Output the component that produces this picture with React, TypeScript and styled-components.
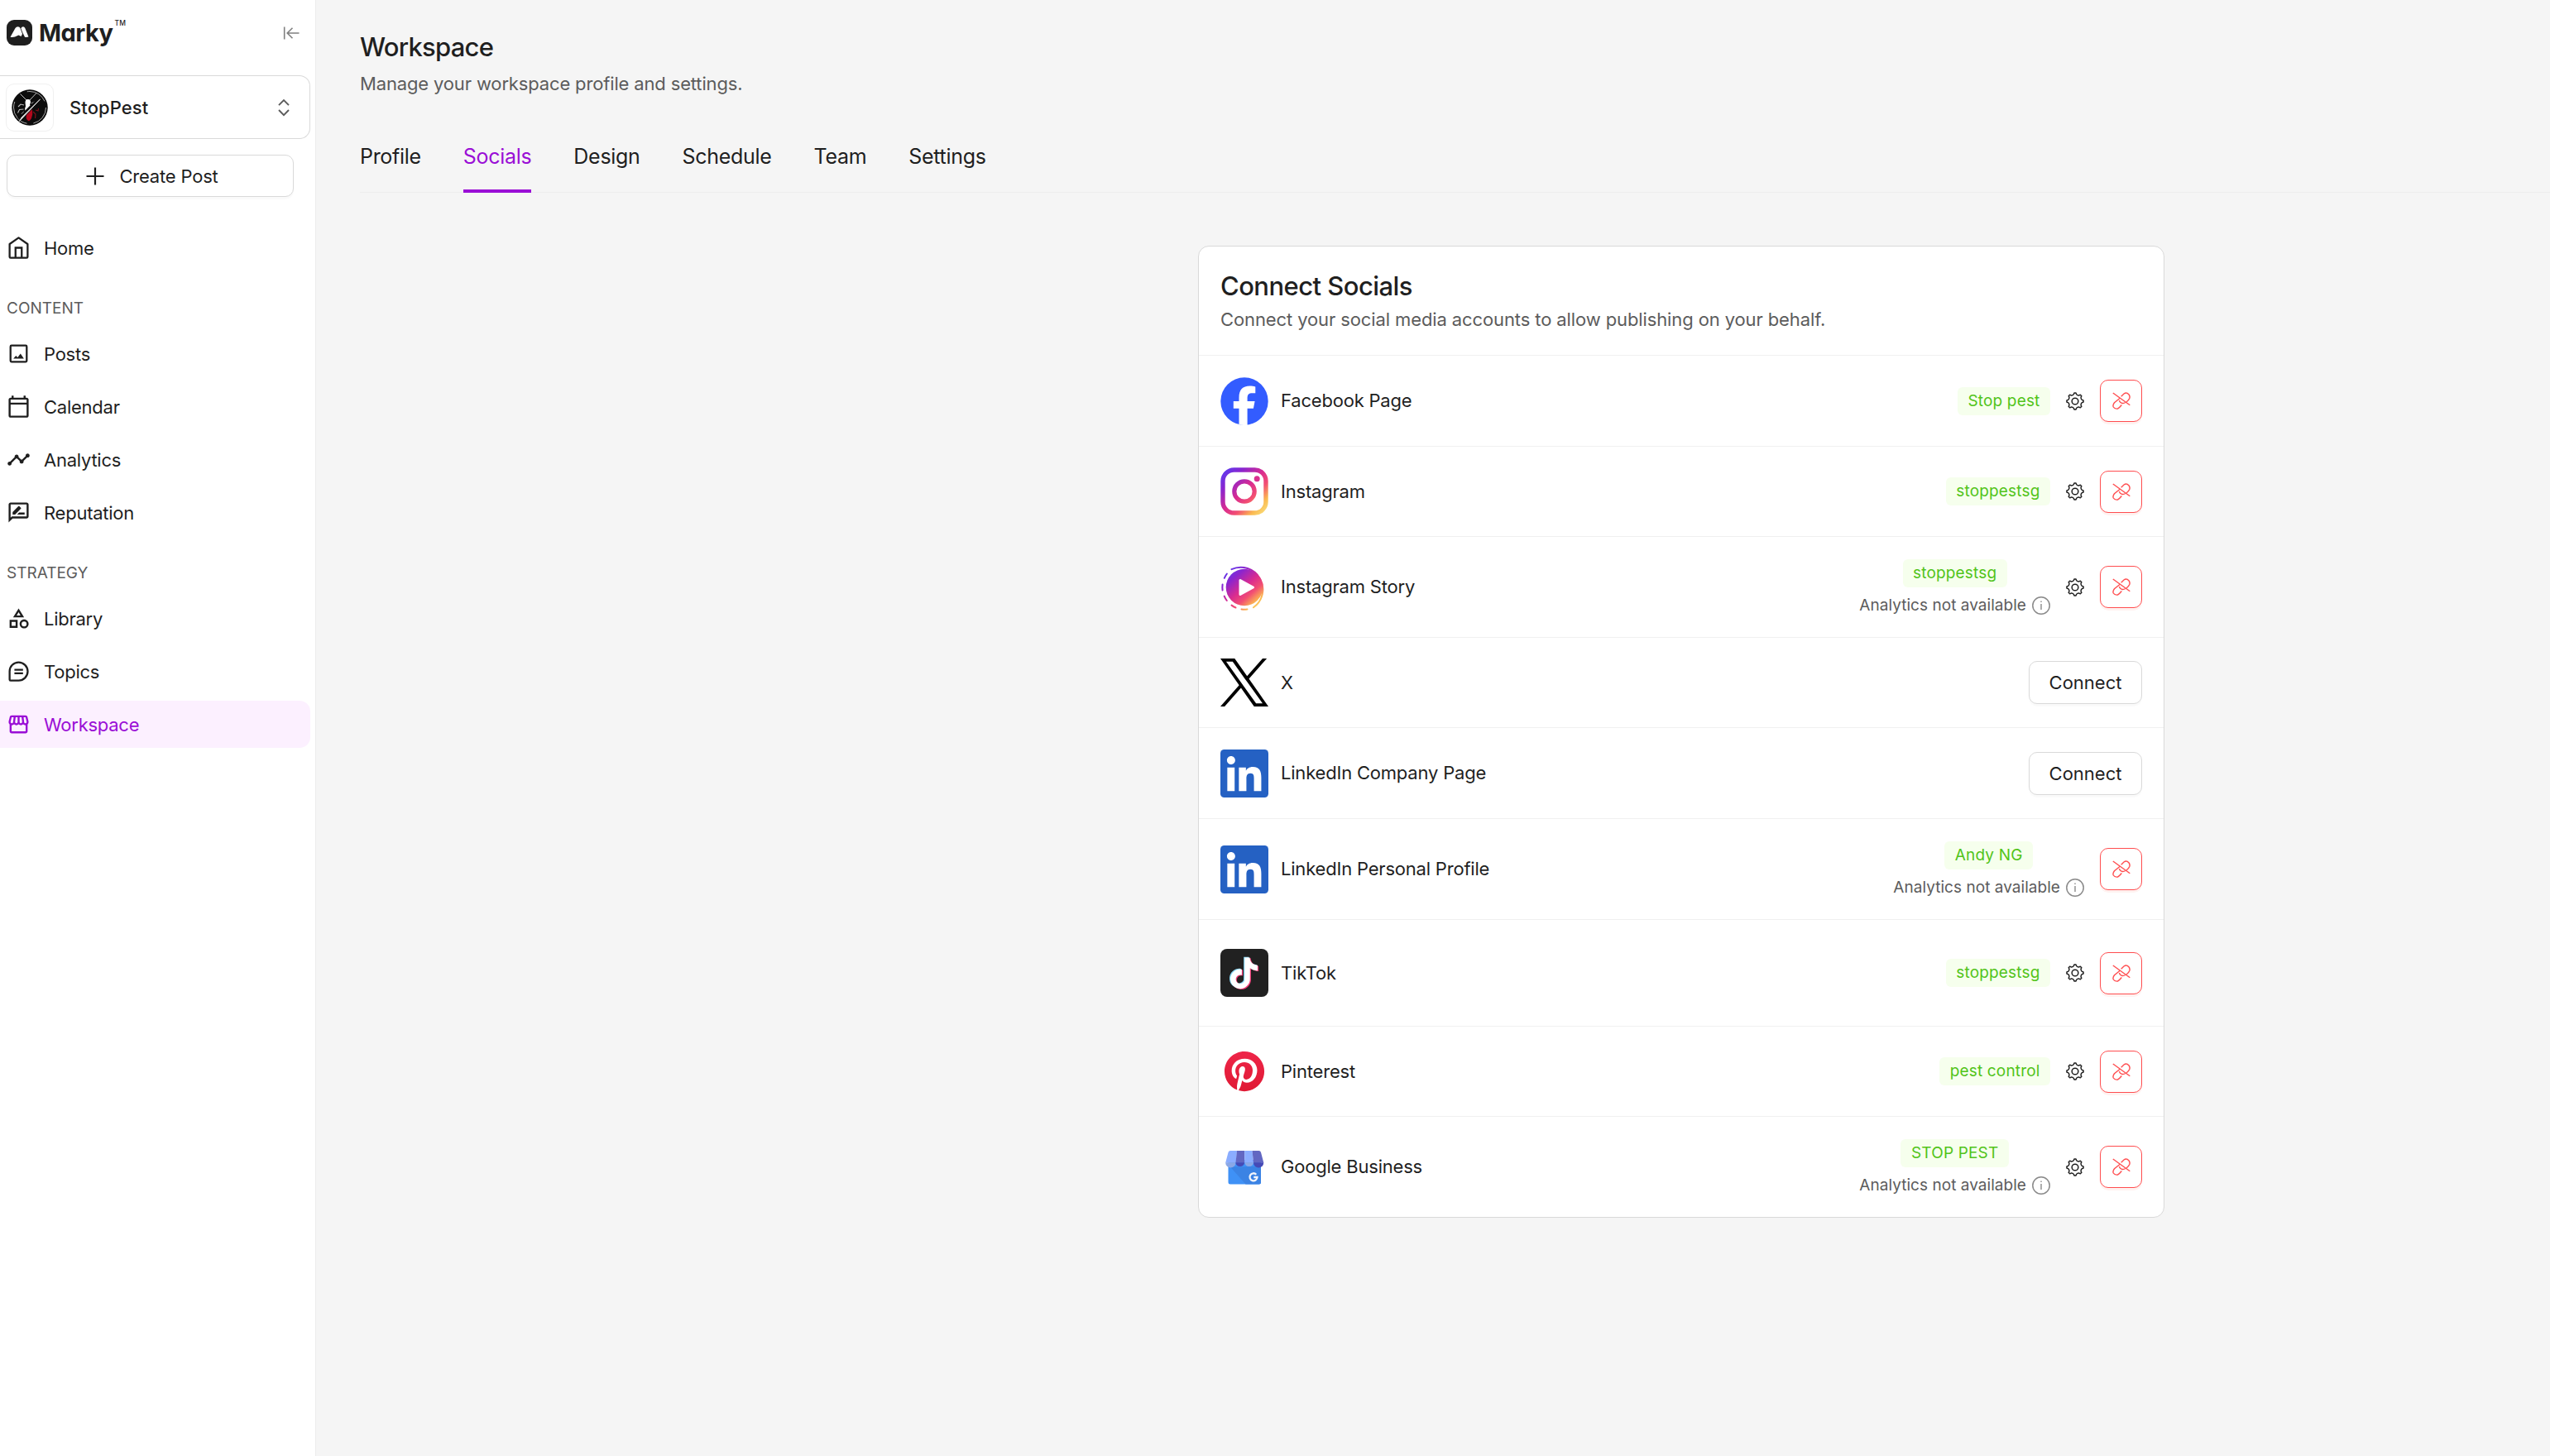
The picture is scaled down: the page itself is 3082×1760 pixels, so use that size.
import React from "react";
import styled, { createGlobalStyle } from "styled-components";
import {
  MdOutlineCalendarToday,
  MdTimeline,
  MdOutlineRateReview,
  MdOutlineCategory,
  MdOutlineStorefront,
} from "react-icons/md";

const ink = "#1f1f1f";
const muted = "#5c5c5c";
const purple = "#9a0fd6";
const red = "#ff4d4f";

const GlobalStyle = createGlobalStyle`
  * { box-sizing: border-box; }
  body {
    margin: 0;
    background: #f5f5f5;
    color: ${ink};
    font-family: Inter, "Liberation Sans", sans-serif;
    font-size: 22px;
  }
  h1, h2, p { margin: 0; font-weight: 400; }
  svg { display: block; flex: none; }
  button { font: inherit; color: inherit; padding: 0; margin: 0; }
`;

const Page = styled.div`
  display: flex;
  width: 3082px;
  height: 1760px;
  overflow: hidden;
`;

const Sidebar = styled.aside`
  flex: none;
  width: 382px;
  background: #fff;
  border-right: 1px solid #ececec;
  display: flex;
  flex-direction: column;
`;

const Brand = styled.header`
  display: flex;
  align-items: center;
  height: 79px;
  padding: 0 19px 0 8px;
`;

const BrandName = styled.span`
  margin-left: 8px;
  font-size: 29px;
  line-height: 30px;
  font-weight: 700;
  letter-spacing: -0.5px;
  font-feature-settings: "cv11";
`;

const Trademark = styled.sup`
  align-self: flex-start;
  margin: 23px auto 0 2px;
  font-size: 8.5px;
  line-height: 10px;
  font-weight: 500;
`;

const Switcher = styled.button`
  display: flex;
  align-items: center;
  width: 375px;
  height: 77px;
  margin-top: 12px;
  padding: 0 24px 0 7px;
  background: #fff;
  border: 1px solid #d9d9d9;
  border-left: 0;
  border-radius: 0 13px 13px 0;
`;

const Avatar = styled.span`
  display: flex;
  align-items: center;
  justify-content: center;
  width: 58px;
  height: 58px;
  border: 1px solid #f0f0f0;
  border-radius: 10px;
`;

const SwitcherName = styled.span`
  flex: 1;
  margin-left: 19px;
  text-align: left;
  font-weight: 500;
  letter-spacing: 0.1px;
`;

const CreateButton = styled.button`
  display: flex;
  align-items: center;
  justify-content: center;
  gap: 18px;
  width: 347px;
  height: 51px;
  margin: 19px 0 0 8px;
  padding-left: 5px;
  background: #fff;
  border: 1px solid #d9d9d9;
  border-radius: 10px;
  box-shadow: 0 3px 0 rgba(0, 0, 0, 0.02);
  letter-spacing: -0.2px;
`;

const Nav = styled.nav`
  display: flex;
  flex-direction: column;
  gap: 7px;
  margin-top: 33px;
`;

const NavItem = styled.a<{ $active?: boolean }>`
  display: flex;
  align-items: center;
  gap: 16px;
  width: 375px;
  height: 57px;
  padding-left: 8px;
  border-radius: 0 13px 13px 0;
  letter-spacing: -0.25px;
  color: ${(p) => (p.$active ? purple : ink)};
  background: ${(p) => (p.$active ? "#fcf0ff" : "transparent")};
`;

const NavHeading = styled.div`
  height: 57px;
  padding: 25px 0 0 8px;
  font-size: 19px;
  line-height: 26px;
  color: ${muted};
`;

const Main = styled.main`
  flex: 1;
  display: flex;
  flex-direction: column;
  align-items: stretch;
  padding: 37px 0 0 53px;
`;

const PageTitle = styled.h1`
  font-size: 31px;
  line-height: 40px;
  font-weight: 500;
  letter-spacing: -0.75px;
`;

const PageHint = styled.p`
  margin-top: 9px;
  line-height: 30px;
  letter-spacing: -0.15px;
  color: ${muted};
`;

const Tabs = styled.div`
  display: flex;
  gap: 51px;
  height: 75px;
  margin-top: 42px;
  border-bottom: 1px solid #ededed;
`;

const Tab = styled.a<{ $active?: boolean }>`
  height: 75px;
  padding-top: 15px;
  font-size: 25px;
  line-height: 32px;
  letter-spacing: -0.3px;
  color: ${(p) => (p.$active ? purple : ink)};
  border-bottom: 4px solid ${(p) => (p.$active ? purple : "transparent")};
`;

const Card = styled.section`
  width: 1168px;
  margin: 64px 0 0 1013px;
  background: #fff;
  border: 1px solid #d9d9d9;
  border-radius: 13px;
`;

const CardHead = styled.div`
  height: 132px;
  padding: 28px 25px 0 26px;
  border-bottom: 1px solid #f0f0f0;
`;

const CardTitle = styled.h2`
  font-size: 31px;
  line-height: 40px;
  font-weight: 500;
  letter-spacing: -0.55px;
`;

const CardHint = styled.p`
  margin-top: 5px;
  line-height: 30px;
  letter-spacing: -0.11px;
  color: ${muted};
`;

const Row = styled.div<{ $height: number }>`
  display: flex;
  align-items: center;
  height: ${(p) => p.$height}px;
  padding: 0 26px;
  border-bottom: 1px solid #f0f0f0;
  &:last-child { border-bottom: 0; }
`;

const Network = styled.span`
  flex: 1;
  margin-left: 15px;
  padding-bottom: 1px;
  letter-spacing: -0.2px;
`;

const Actions = styled.div`
  display: flex;
  align-items: center;
  gap: 19px;
`;

const Status = styled.div`
  display: flex;
  flex-direction: column;
  align-items: center;
  gap: 10px;
`;

const Tag = styled.span`
  height: 34px;
  padding: 0 12.5px;
  border-radius: 6px;
  background: #f6ffed;
  color: #52c41a;
  font-size: 19px;
  line-height: 34px;
  letter-spacing: 0.17px;
`;

const Notice = styled.span`
  display: flex;
  align-items: center;
  gap: 7px;
  height: 24px;
  font-size: 19px;
  line-height: 24px;
  letter-spacing: 0.04px;
  color: ${muted};
`;

const UnlinkButton = styled.button`
  display: flex;
  align-items: center;
  justify-content: center;
  width: 51px;
  height: 51px;
  background: #fff;
  border: 1px solid ${red};
  border-radius: 10px;
  box-shadow: 0 3px 0 rgba(255, 38, 5, 0.06);
`;

const ConnectButton = styled.button`
  width: 137px;
  height: 52px;
  background: #fff;
  border: 1px solid #d9d9d9;
  border-radius: 10px;
  box-shadow: 0 3px 0 rgba(0, 0, 0, 0.02);
`;

const LogoMark = () => (
  <svg width="31" height="31" viewBox="0 0 31 31">
    <rect width="31" height="31" rx="9" fill="#1f1f1f" />
    <path d="M4.500 20.800 10.500 10q1-1.800 3.200-1.800 2 0 2.600 1.600L19 17l-1.500 3-3-1.500-4.500 2q-2.500.8-5.500.3Z" fill="#fff" />
    <path d="M17.300 10.200q.9-2 2.700-2 1.500 0 2.300 1.800L26.500 20.500q-2 .8-4.500.3-1-1.900-2.500-5Z" fill="#fff" />
  </svg>
);

const CollapseIcon = () => (
  <svg width="20" height="16" viewBox="0 0 20 16" fill="none" stroke="#808080" strokeWidth="1.600">
    <path d="M1.700 .5v15M19.500 8H5.200M11.500 1.800 5.200 8l6.300 6.200" />
  </svg>
);

const ChevronsIcon = () => (
  <svg width="14" height="22" viewBox="0 0 14 22" fill="none" stroke="#5c5c5c" strokeWidth="1.900">
    <path d="M1 8.200 7 2l6 6.200M1 14l6 6.200L13 14" />
  </svg>
);

const PlusIcon = () => (
  <svg width="22" height="22" viewBox="0 0 22 22" stroke={ink} strokeWidth="2.200">
    <path d="M11 .5v21M.5 11h21" />
  </svg>
);

const PestAvatar = () => (
  <svg width="44" height="44" viewBox="0 0 44 44" fill="none">
    <circle cx="22" cy="22" r="21.700" fill="#0c0c0c" />
    <circle cx="22" cy="22" r="19.500" stroke="#cfcfcf" strokeWidth=".8" strokeDasharray="26 8 34 20" />
    <path d="M10.500 5.500l8.500 8.500M30 4.500l-9 9.500" stroke="#d8d8d8" strokeWidth=".9" />
    <path d="M16.500 16q0-4 3.300-4t3.200 4l-1 2.500 2 2.500-2 5-4 2.500q-3-4-1-8Z" fill="#fff" />
    <path d="M15 19l-4-1-3 3M14.500 24l-5 .5-2 4M15 27l-3 3M24 17l6-3" stroke="#bdbdbd" strokeWidth="1.100" />
    <path d="M18 31l7-7q1 6-1 11-2.500 5-5 2-2-2-1-6Z" fill="#b3081c" />
    <path d="M26 27l3 3-.5 5M29 25l3 1 .5-3" stroke="#7d1018" strokeWidth="1.200" />
    <path d="M9 36 34 11" stroke="#0c0c0c" strokeWidth="4.500" />
    <path d="M9.500 38.500 34.500 12 12 34Z" fill="#e8e8e8" stroke="#e8e8e8" strokeWidth=".8" />
  </svg>
);

const LineIcon = ({ children }: { children: React.ReactNode }) => (
  <svg width="29" height="29" viewBox="0 0 24 24" fill="none" stroke="currentColor" strokeWidth="1.900">
    {children}
  </svg>
);

const HomeIcon = () => (
  <LineIcon>
    <path d="M12 2 3 8.300V21q0 1 1 1h16q1 0 1-1V8.300Z" strokeLinejoin="round" />
    <path d="M8.900 22V12h6.200v10" />
  </LineIcon>
);

const PostsIcon = () => (
  <LineIcon>
    <rect x="3.900" y="3.900" width="16.200" height="16.200" rx="1" />
    <path d="M6.700 17l2.600-3 1.700 1.800L13.900 12l3.400 5Z" fill="currentColor" stroke="none" />
  </LineIcon>
);

const TopicsIcon = () => (
  <LineIcon>
    <path d="M12 3a9.100 9.100 0 1 1 0 18.200H4q-1 0-1-1V12A9 9 0 0 1 12 3Z" />
    <path d="M7.800 10.500h8.600M7.800 14h8.600" />
  </LineIcon>
);

const gearOutline = (() => {
  const at = (deg: number, r: number) => {
    const a = ((deg - 90) * Math.PI) / 180;
    return `${(12 + r * Math.cos(a)).toFixed(2)} ${(12 + r * Math.sin(a)).toFixed(2)}`;
  };
  let d = `M${at(-6, 11)}`;
  for (let k = 0; k < 8; k++) {
    const c = k * 45;
    d += `L${at(c + 6, 11)}L${at(c + 11, 9.3)}Q${at(c + 22.5, 8.1)} ${at(c + 34, 9.3)}L${at(c + 39, 11)}`;
  }
  return d + "Z";
})();

const GearIcon = () => (
  <svg width="22" height="22" viewBox="0 0 24 24" fill="none" stroke={ink} strokeWidth="1.600" strokeLinejoin="round">
    <path d={gearOutline} />
    <circle cx="12" cy="12" r="4.200" />
  </svg>
);

const UnlinkIcon = () => (
  <svg width="22" height="21" viewBox="0 0 22 21" fill="none" stroke={red} strokeWidth="1.400">
    <path d="M.8 1 21.300 15.800" />
    <path d="M10.700 5.300 14 2q2-1.500 4.300-.7Q22 3.500 20.800 7.500 20 9.500 17 12" />
    <path d="M8.500 10q.5 3 3.600 3.500 2 .2 3.700-1" />
    <path d="M9 7.500 2.500 12.700Q.2 15.500 1.300 18q1.700 2.700 5.200 2Q8.500 19 11.300 15.500" />
  </svg>
);

const InfoIcon = () => (
  <svg width="22" height="22" viewBox="0 0 22 22" fill="none" stroke="#8a8a8a" strokeWidth="1.500">
    <circle cx="11" cy="11" r="10.200" />
    <path d="M11 9v7M11 5.500v1.600" strokeWidth="1.400" />
  </svg>
);

const brandStops = (
  <>
    <stop offset="0" stopColor="#5b3cf0" />
    <stop offset=".22" stopColor="#8a25cf" />
    <stop offset=".48" stopColor="#d92c90" />
    <stop offset=".66" stopColor="#f24e73" />
    <stop offset=".84" stopColor="#fbb950" />
    <stop offset="1" stopColor="#f9e07c" />
  </>
);

const FacebookLogo = () => (
  <svg width="58" height="58" viewBox="0 0 58 58">
    <circle cx="29" cy="29" r="28.700" fill="#335cff" />
    <path
      d="M22.500 57V37.800h-6.700v-8.900h6.700v-4.200c0-9.300 4.200-14.100 13.200-14.100 2 0 4.800.3 6.600.8v7.900h-3.600c-4.700 0-6.100 1.800-6.100 6.300v3.300h9l-1.700 8.900h-7.300V58q-5 .4-10.100-1Z"
      fill="#fff"
    />
  </svg>
);

const InstagramLogo = () => (
  <svg width="58" height="58" viewBox="0 0 58 58" fill="none">
    <defs>
      <linearGradient id="ig" gradientUnits="userSpaceOnUse" x1="3" y1="3" x2="55" y2="55">
        {brandStops}
      </linearGradient>
    </defs>
    <rect x="3" y="3" width="52" height="52" rx="13.500" stroke="url(#ig)" strokeWidth="5.400" />
    <circle cx="29" cy="29" r="12.200" stroke="url(#ig)" strokeWidth="5.200" />
    <circle cx="44.200" cy="13.700" r="3.500" fill="#d9318f" />
  </svg>
);

const StoryLogo = () => (
  <svg width="58" height="58" viewBox="0 0 58 58" fill="none">
    <defs>
      <linearGradient id="story" gradientUnits="userSpaceOnUse" x1="8" y1="6" x2="50" y2="54">
        {brandStops}
      </linearGradient>
    </defs>
    <circle cx="29" cy="29" r="22.300" fill="url(#story)" />
    <path d="M24 20.500v17l15.500-8.500Z" fill="#fff" stroke="#fff" strokeWidth="3" strokeLinejoin="round" />
    <g stroke="url(#story)" strokeWidth="2" strokeLinecap="round">
      <path d="M13.500 7.200A26.700 26.700 0 0 1 40 53.300" />
      <path d="M7.900 12.500A26.700 26.700 0 0 0 4.800 17.800M2.600 25.500A26.700 26.700 0 0 0 2.600 32.500M4.700 39.600A26.700 26.700 0 0 0 7.800 45M13.500 50.600A26.700 26.700 0 0 0 18.500 53.500M25.500 55.480A26.700 26.700 0 0 0 32.500 55.480" />
    </g>
  </svg>
);

const XLogo = () => (
  <svg width="58" height="58" viewBox="0 0 1200 1227" preserveAspectRatio="none">
    <path
      fill="#000"
      d="M714.163 519.284L1160.890 0H1055.030L667.137 450.887L357.328 0H0L468.492 681.821L0 1226.370H105.866L515.491 750.218L842.672 1226.370H1200L714.137 519.284H714.163ZM569.165 687.828L521.697 619.934L144.011 79.694H306.615L611.412 515.685L658.880 583.579L1055.080 1150.300H892.476L569.165 687.854V687.828Z"
    />
  </svg>
);

const LinkedInLogo = () => (
  <svg width="58" height="58" viewBox="0 0 24 24">
    <rect width="24" height="24" rx="1.900" fill="#2561c3" />
    <path
      fill="#fff"
      d="M20.447 20.752h-3.654v-6.069c0-1.328-.027-2.737-1.752-2.737-1.753 0-2.036 1.345-2.036 2.739v6.067H9.251V9h3.514v1.561h.046c.477-.9 1.637-1.850 3.370-1.850 3.601 0 4.267 2.370 4.267 5.455v6.586zM5.337 7.433c-1.144 0-2.063-.926-2.063-2.065 0-1.138.92-2.063 2.063-2.063 1.140 0 2.064.925 2.064 2.063 0 1.139-.925 2.065-2.064 2.065zm1.782 13.319H3.455V9h3.664v11.752z"
    />
  </svg>
);

const note =
  "M12.525.02c1.310-.02 2.610-.01 3.910-.02.08 1.530.63 3.090 1.750 4.170 1.120 1.110 2.700 1.620 4.240 1.790v4.030c-1.440-.05-2.890-.35-4.200-.97-.57-.26-1.100-.59-1.620-.93-.01 2.920.01 5.840-.02 8.750-.08 1.400-.54 2.790-1.350 3.940-1.310 1.920-3.580 3.170-5.910 3.210-1.430.08-2.860-.31-4.080-1.030-2.020-1.190-3.440-3.370-3.650-5.710-.02-.5-.03-1-.01-1.490.18-1.900 1.120-3.720 2.580-4.960 1.660-1.440 3.980-2.130 6.150-1.720.02 1.480-.04 2.960-.04 4.440-.99-.32-2.150-.23-3.020.37-.63.41-1.110 1.040-1.360 1.750-.21.51-.15 1.070-.14 1.610.24 1.640 1.820 3.020 3.500 2.870 1.120-.01 2.190-.66 2.770-1.610.19-.33.4-.67.41-1.060.1-1.790.06-3.570.07-5.360.01-4.030-.01-8.050.02-12.070z";

const TikTokLogo = () => (
  <svg width="58" height="58" viewBox="0 0 58 58">
    <rect width="58" height="58" rx="8" fill="#212121" />
    <path d={note} fill="#8ad7f5" transform="translate(8.500 9.800) scale(1.570)" />
    <path d={note} fill="#f03c78" transform="translate(10.900 11.300) scale(1.570)" />
    <path d={note} fill="#fff" transform="translate(9.700 10.500) scale(1.570)" />
  </svg>
);

const PinterestLogo = () => (
  <svg width="58" height="58" viewBox="0 0 58 58">
    <defs>
      <linearGradient id="pin" x1="0" y1="0" x2="0" y2="1">
        <stop offset="0" stopColor="#ee2549" />
        <stop offset="1" stopColor="#e01a34" />
      </linearGradient>
    </defs>
    <circle cx="29" cy="29" r="23" fill="#fff" />
    <path
      transform="translate(4.900 4.900) scale(2.010)"
      fill="url(#pin)"
      d="M12.017 0C5.396 0 .029 5.367.029 11.987c0 5.079 3.158 9.417 7.618 11.162-.105-.949-.199-2.403.041-3.439.219-.937 1.406-5.957 1.406-5.957s-.359-.72-.359-1.781c0-1.663.967-2.911 2.168-2.911 1.024 0 1.518.769 1.518 1.688 0 1.029-.653 2.567-.992 3.992-.285 1.193.6 2.165 1.775 2.165 2.128 0 3.768-2.245 3.768-5.487 0-2.861-2.063-4.869-5.008-4.869-3.410 0-5.409 2.562-5.409 5.199 0 1.033.394 2.143.889 2.741.099.120.112.225.085.345-.09.375-.293 1.199-.334 1.363-.053.225-.172.271-.401.165-1.495-.69-2.433-2.878-2.433-4.646 0-3.776 2.748-7.252 7.920-7.252 4.158 0 7.392 2.967 7.392 6.923 0 4.135-2.607 7.462-6.233 7.462-1.214 0-2.354-.629-2.758-1.379l-.749 2.848c-.269 1.045-1.004 2.352-1.498 3.146 1.123.345 2.306.535 3.550.535 6.607 0 11.985-5.365 11.985-11.987C23.970 5.390 18.592.026 11.985.026L12.017 0z"
    />
  </svg>
);

const GoogleBusinessLogo = () => (
  <svg width="58" height="58" viewBox="0 0 58 58">
    <rect x="9.500" y="20" width="39.500" height="29.500" rx="2.500" fill="#3f91f6" />
    <path d="M12 28.500 30.500 49.500H46.500q2.500 0 2.500-2.500V28Z" fill="#3b83e4" />
    <path d="M12 9h8l-1 14.500H6.200L9.500 11Q10 9 12 9Z" fill="#8badff" />
    <path d="M20 9h9.200v14.500H18.500Z" fill="#6267c2" />
    <path d="M29.200 9h9.300l1.500 14.500H29.200Z" fill="#8badff" />
    <path d="M38.500 9h8q2 0 2.500 2l3.300 12.500H40Z" fill="#6267c2" />
    <path d="M6.200 23.300h12.300a5.800 5.800 0 0 1-12.300 0Z" fill="#8ba8e6" />
    <path d="M18.300 23.300h10.900a5.500 5.500 0 0 1-10.900 0Z" fill="#464ab6" />
    <path d="M29.200 23.300h10.900a5.500 5.500 0 0 1-10.900 0Z" fill="#8ba8e6" />
    <path d="M40 23.300h12.300a5.800 5.800 0 0 1-12.300 0Z" fill="#464ab6" />
    <path d="M43.300 37.700a4.500 4.500 0 1 0 1.200 3.300h-4.200" fill="none" stroke="#f2f5fb" strokeWidth="2.300" />
  </svg>
);

type Social = {
  name: string;
  height: number;
  logo: React.ReactNode;
  account?: string;
  analytics?: boolean;
  settings?: boolean;
};

const socials: Social[] = [
  { name: "Facebook Page", height: 110, logo: <FacebookLogo />, account: "Stop pest", analytics: true, settings: true },
  { name: "Instagram", height: 109, logo: <InstagramLogo />, account: "stoppestsg", analytics: true, settings: true },
  { name: "Instagram Story", height: 122, logo: <StoryLogo />, account: "stoppestsg", settings: true },
  { name: "X", height: 109, logo: <XLogo /> },
  { name: "LinkedIn Company Page", height: 110, logo: <LinkedInLogo /> },
  { name: "LinkedIn Personal Profile", height: 122, logo: <LinkedInLogo />, account: "Andy NG" },
  { name: "TikTok", height: 129, logo: <TikTokLogo />, account: "stoppestsg", analytics: true, settings: true },
  { name: "Pinterest", height: 109, logo: <PinterestLogo />, account: "pest control", analytics: true, settings: true },
  { name: "Google Business", height: 121, logo: <GoogleBusinessLogo />, account: "STOP PEST", settings: true },
];

const SocialRow = ({ name, height, logo, account, analytics, settings }: Social) => (
  <Row $height={height}>
    {logo}
    <Network>{name}</Network>
    {account ? (
      <Actions>
        <Status>
          <Tag>{account}</Tag>
          {!analytics && (
            <Notice>
              Analytics not available <InfoIcon />
            </Notice>
          )}
        </Status>
        {settings && <GearIcon />}
        <UnlinkButton aria-label="Disconnect">
          <UnlinkIcon />
        </UnlinkButton>
      </Actions>
    ) : (
      <ConnectButton>Connect</ConnectButton>
    )}
  </Row>
);

export default function App() {
  return (
    <>
      <GlobalStyle />
      <Page>
        <Sidebar>
          <Brand>
            <LogoMark />
            <BrandName>Marky</BrandName>
            <Trademark>TM</Trademark>
            <CollapseIcon />
          </Brand>
          <Switcher>
            <Avatar>
              <PestAvatar />
            </Avatar>
            <SwitcherName>StopPest</SwitcherName>
            <ChevronsIcon />
          </Switcher>
          <CreateButton>
            <PlusIcon />
            Create Post
          </CreateButton>
          <Nav>
            <NavItem><HomeIcon />Home</NavItem>
            <NavHeading>CONTENT</NavHeading>
            <NavItem><PostsIcon />Posts</NavItem>
            <NavItem><MdOutlineCalendarToday size={29} />Calendar</NavItem>
            <NavItem><MdTimeline size={29} />Analytics</NavItem>
            <NavItem><MdOutlineRateReview size={29} />Reputation</NavItem>
            <NavHeading>STRATEGY</NavHeading>
            <NavItem><MdOutlineCategory size={29} />Library</NavItem>
            <NavItem><TopicsIcon />Topics</NavItem>
            <NavItem $active><MdOutlineStorefront size={29} />Workspace</NavItem>
          </Nav>
        </Sidebar>
        <Main>
          <PageTitle>Workspace</PageTitle>
          <PageHint>Manage your workspace profile and settings.</PageHint>
          <Tabs>
            <Tab>Profile</Tab>
            <Tab $active>Socials</Tab>
            <Tab>Design</Tab>
            <Tab>Schedule</Tab>
            <Tab>Team</Tab>
            <Tab>Settings</Tab>
          </Tabs>
          <Card>
            <CardHead>
              <CardTitle>Connect Socials</CardTitle>
              <CardHint>Connect your social media accounts to allow publishing on your behalf.</CardHint>
            </CardHead>
            {socials.map((s) => (
              <SocialRow key={s.name} {...s} />
            ))}
          </Card>
        </Main>
      </Page>
    </>
  );
}
